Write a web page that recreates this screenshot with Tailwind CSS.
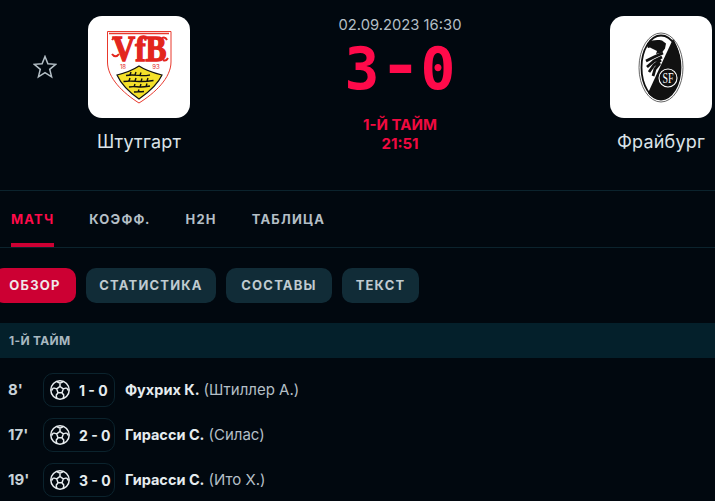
<!DOCTYPE html>
<html lang="ru">
<head>
  <meta charset="UTF-8" />
  <title>Штутгарт - Фрайбург</title>
  <script src="https://cdn.jsdelivr.net/npm/@tailwindcss/browser@4"></script>
</head>
<body class="bg-[#01080f] font-['Inter','Liberation_Sans',sans-serif] overflow-hidden h-[501px]">

  <!-- match header -->
  <header class="h-[191px] border-b border-[#0b232d] grid grid-cols-[88px_102px_1fr_102px_3px]">
    <div class="pt-[55px] pl-[33px]">
      <svg class="w-6 h-6 text-[#b4bfc6]" viewBox="0 0 24 24" fill="none" stroke="currentColor" stroke-width="1.5" stroke-linejoin="miter">
        <path d="M12 1.500l2.900 7.300 7.800.5-6 5 1.900 7.600-6.600-4.200-6.600 4.200 1.900-7.600-6-5 7.800-.5z"/>
      </svg>
    </div>

    <div class="pt-4 flex flex-col items-center">
      <div class="w-[102px] h-[102px] bg-white rounded-[14px]">
        <svg viewBox="0 0 102 102" class="w-full h-full">
          <path d="M19.500 15.500H83V46C83 62 67 77 51 87C35 77 19.500 62 19.500 46Z" fill="#fff" stroke="#e8382c" stroke-width="1"/>
          <path d="M21 17.500H81" stroke="#e8382c" stroke-width="1.500"/>
          <text x="51.500" y="45" text-anchor="middle" textLength="54" lengthAdjust="spacingAndGlyphs" font-family="Liberation Serif" font-weight="700" font-size="35" fill="#e3261d" stroke="#e3261d" stroke-width="1.400">VfB</text>
          <path d="M24 24c2-3 5-3 7-1M24 38c2 3 5 3 7 0M79 24c-1-2-3-3-5-2M80 42c-1 2-3 3-5 2" fill="none" stroke="#e3261d" stroke-width="2"/>
          <text x="35" y="53" text-anchor="middle" font-family="Inter" font-size="6" fill="#e3261d">18</text>
          <text x="68" y="53" text-anchor="middle" font-family="Inter" font-size="6" fill="#e3261d">93</text>
          <path d="M29 59C37 57 45 54 51 50C57 54 66 57 74 59C70 68 61 76 51 83C41 76 33 68 29 59Z" fill="#f5e12a" stroke="#111" stroke-width="1.200"/>
          <path d="M38 59.500c5-1 9-.5 14 0s7 0 10-.5M42 59l1-3M47 59l1-3M52 59.500l1-3M35.500 65.500c7-1 12 0 18 0s9-.5 12-1M41 65l1-3M47 65l1-3M53 65.500l1-3M59 65l1-3M41 71c4-1 8 0 12 0s6-.5 9-1M46 71l1-3M52 71l1-3M58 70.500l1-3M46 76c3-.5 6 0 10-.5M50 76l1-2.500" fill="none" stroke="#111" stroke-width="1.400"/>
        </svg>
      </div>
      <div class="mt-[14px] text-[18px] tracking-[0.2px] leading-5 text-[#dbe3e8]">Штутгарт</div>
    </div>

    <div class="pt-4 flex flex-col items-center">
      <div class="text-[14.750px] leading-[18px] text-[#b4bfc6]">02.09.2023 16:30</div>
      <div class="mt-[3px] h-[64px] flex gap-[3px] text-[58px] leading-[64px] font-bold text-[#ff0a4a] font-['DejaVu_Sans_Mono',monospace]">
        <span>3</span>
        <span class="scale-x-[1.200] -translate-y-[3px]">-</span>
        <span>0</span>
      </div>
      <div class="mt-[14px] text-[15px] leading-[19px] font-bold text-[#f00a40] text-center">
        <div>1-Й ТАЙМ</div>
        <div>21:51</div>
      </div>
    </div>

    <div class="pt-4 flex flex-col items-center">
      <div class="w-[102px] h-[102px] bg-white rounded-[14px]">
        <svg viewBox="0 0 102 102" class="w-full h-full">
          <ellipse cx="51" cy="51.500" rx="22" ry="34.500" fill="#fff" stroke="#666" stroke-width="1"/>
          <ellipse cx="51" cy="51.500" rx="19.500" ry="32" fill="#fff" stroke="#111" stroke-width="1.800"/>
          <path d="M63 23C68 30 70.500 41 70.500 51.500C70.500 69 61 83.500 51 83.500C46 83.500 41 81 38 77Z" fill="#111"/>
          <circle cx="58" cy="62" r="9" fill="#111" stroke="#fff" stroke-width="1.100"/>
          <text x="58" y="67" text-anchor="middle" textLength="11" lengthAdjust="spacingAndGlyphs" font-family="Liberation Serif" font-size="14" fill="#fff">SF</text>
          <path d="M38 26.500c4-2.500 9-3 14-2l4 3-1 5-3 4-6 1.500 1-3-4-2-3-1.500-2 .5c-1-1-1-3-1-4.500z" fill="#111"/>
          <path d="M53 37L44 41L36 45M52 41L44 45L37 51M51 44L44 49L39 56M50 47L45 53L43 60" fill="none" stroke="#111" stroke-width="2.800"/>
        </svg>
      </div>
      <div class="mt-[14px] text-[18px] tracking-[0.2px] leading-5 text-[#dbe3e8] whitespace-nowrap">Фрайбург</div>
    </div>
    <div></div>
  </header>

  <!-- main tabs -->
  <nav class="h-[57px] border-b border-[#0b232d] pl-[11px] flex gap-[35px] text-[13px] font-bold tracking-[1.200px] text-[#b4bfc6]">
    <a class="h-full pt-[19px] leading-[18px] text-[#ff0a4a] border-b-4 border-[#cc0033]">МАТЧ</a>
    <a class="pt-[19px] leading-[18px]">КОЭФФ.</a>
    <a class="pt-[19px] leading-[18px]">H2H</a>
    <a class="pt-[19px] leading-[18px]">ТАБЛИЦА</a>
  </nav>

  <!-- sub tabs -->
  <div class="mt-5 ml-[-6px] flex gap-[10px] text-[13px] font-bold tracking-[1.200px] text-[#c0cbd1] text-center">
    <a class="w-[82px] h-[35px] leading-[35px] rounded-[10px] bg-[#cc0033] text-[#f0e6ea]">ОБЗОР</a>
    <a class="w-[130px] h-[35px] leading-[35px] rounded-[10px] bg-[#112c37]">СТАТИСТИКА</a>
    <a class="w-[106px] h-[35px] leading-[35px] rounded-[10px] bg-[#112c37]">СОСТАВЫ</a>
    <a class="w-[77px] h-[35px] leading-[35px] rounded-[10px] bg-[#112c37]">ТЕКСТ</a>
  </div>

  <div class="mt-5 h-[35px] bg-[#04202b] pl-[9px] text-[12px] tracking-[0.300px] leading-[35px] font-bold text-[#a9b8c0]">1-Й ТАЙМ</div>

  <!-- goals -->
  <ul class="pt-[15px] flex flex-col gap-[11px] text-[15px]">
    <li class="flex items-center h-[34px]">
      <span class="w-[43px] pl-2 font-bold text-[#c8d2d8]">8'</span>
      <span class="w-[72px] h-[34px] border border-[#0b232d] rounded-[10px] flex items-center pl-[6px] gap-[9px] text-[14px] font-bold text-[#e6ecef]">
        <svg class="w-5 h-5 shrink-0" viewBox="0 0 20 20" fill="none" stroke="#e8edf0" stroke-width="1.500"><circle cx="10" cy="10" r="9.200"/><path d="M10 6.500l3.300 2.400-1.300 3.900H8l-1.300-3.900zM10 6.500V3.200M13.300 8.900l3.300-1M12 12.800l2 2.700M8 12.800l-2 2.700M6.700 8.900l-3.300-1M6.600 1.500L10 3.200l3.400-1.700M16.600 7.900l1.900 2.600M14 15.500l-1 3M6 15.500l1 3M3.400 7.900l-1.900 2.600"/></svg>
        <span class="whitespace-nowrap">1 - 0</span>
      </span>
      <span class="ml-[10px] text-[14.500px] font-bold text-[#e6ecef]">Фухрих К.</span>
      <span class="ml-1 text-[#b4bfc6]">(Штиллер А.)</span>
    </li>
    <li class="flex items-center h-[34px]">
      <span class="w-[43px] pl-2 font-bold text-[#c8d2d8]">17'</span>
      <span class="w-[72px] h-[34px] border border-[#0b232d] rounded-[10px] flex items-center pl-[6px] gap-[9px] text-[14px] font-bold text-[#e6ecef]">
        <svg class="w-5 h-5 shrink-0" viewBox="0 0 20 20" fill="none" stroke="#e8edf0" stroke-width="1.500"><circle cx="10" cy="10" r="9.200"/><path d="M10 6.500l3.300 2.400-1.300 3.900H8l-1.300-3.900zM10 6.500V3.200M13.300 8.900l3.300-1M12 12.800l2 2.700M8 12.800l-2 2.700M6.700 8.900l-3.300-1M6.600 1.500L10 3.200l3.400-1.700M16.600 7.900l1.900 2.600M14 15.500l-1 3M6 15.500l1 3M3.400 7.900l-1.900 2.600"/></svg>
        <span class="whitespace-nowrap">2 - 0</span>
      </span>
      <span class="ml-[10px] text-[14.500px] font-bold text-[#e6ecef]">Гирасси С.</span>
      <span class="ml-1 text-[#b4bfc6]">(Силас)</span>
    </li>
    <li class="flex items-center h-[34px]">
      <span class="w-[43px] pl-2 font-bold text-[#c8d2d8]">19'</span>
      <span class="w-[72px] h-[34px] border border-[#0b232d] rounded-[10px] flex items-center pl-[6px] gap-[9px] text-[14px] font-bold text-[#e6ecef]">
        <svg class="w-5 h-5 shrink-0" viewBox="0 0 20 20" fill="none" stroke="#e8edf0" stroke-width="1.500"><circle cx="10" cy="10" r="9.200"/><path d="M10 6.500l3.300 2.400-1.300 3.900H8l-1.300-3.900zM10 6.500V3.200M13.300 8.900l3.300-1M12 12.800l2 2.700M8 12.800l-2 2.700M6.700 8.900l-3.300-1M6.600 1.500L10 3.200l3.400-1.700M16.600 7.900l1.900 2.600M14 15.500l-1 3M6 15.500l1 3M3.400 7.900l-1.900 2.600"/></svg>
        <span class="whitespace-nowrap">3 - 0</span>
      </span>
      <span class="ml-[10px] text-[14.500px] font-bold text-[#e6ecef]">Гирасси С.</span>
      <span class="ml-1 text-[#b4bfc6]">(Ито Х.)</span>
    </li>
  </ul>

</body>
</html>
